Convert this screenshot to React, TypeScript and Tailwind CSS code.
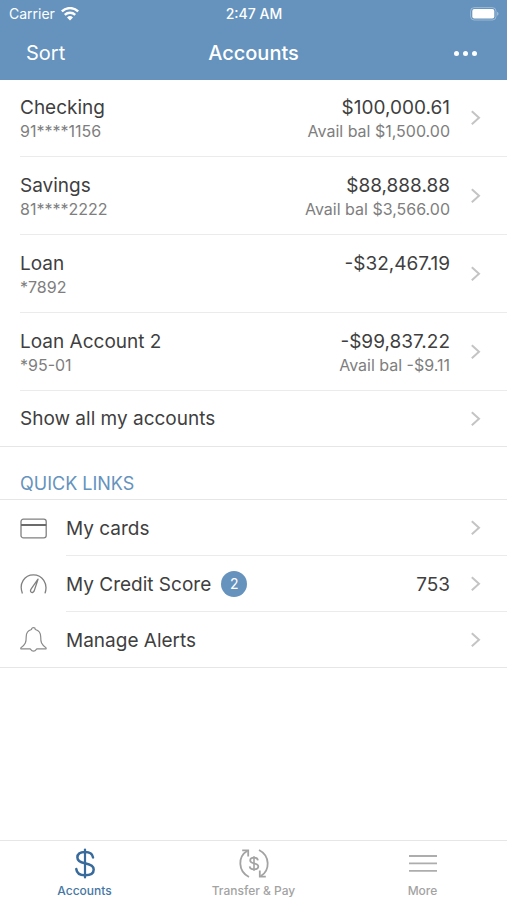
import type { ReactNode } from 'react';

const accounts = [
  { name: 'Checking', number: '91****1156', balance: '$100,000.61', available: 'Avail bal $1,500.00' },
  { name: 'Savings', number: '81****2222', balance: '$88,888.88', available: 'Avail bal $3,566.00' },
  { name: 'Loan', number: '*7892', balance: '-$32,467.19' },
  { name: 'Loan Account 2', number: '*95-01', balance: '-$99,837.22', available: 'Avail bal -$9.11' },
];

function Chevron() {
  return (
    <svg className="h-4 w-3 shrink-0" viewBox="0 0 12 16" fill="none" stroke="#c4c4c4" strokeWidth="2" aria-hidden="true">
      <path d="M1.8 1.2 9 7.7l-7.2 6.5" />
    </svg>
  );
}

function WifiIcon() {
  return (
    <svg className="h-[14px] w-[18px]" viewBox="0 0 18 14" fill="none" stroke="#fff" strokeWidth="2.4" aria-hidden="true">
      <path d="M.8 4.4a11.8 11.8 0 0 1 16.4 0" />
      <path d="M3.8 7.8a7.5 7.5 0 0 1 10.4 0" />
      <path d="M9 13.4 6 10.4a4.3 4.3 0 0 1 6 0Z" fill="#fff" stroke="none" />
    </svg>
  );
}

function BatteryIcon() {
  return (
    <svg className="h-[14px] w-[30px]" viewBox="0 0 30 14" fill="none" aria-hidden="true">
      <rect x="1.6" y=".6" width="25.4" height="12.4" rx="3.6" stroke="#fff" strokeOpacity=".35" />
      <rect x="3.3" y="2.1" width="22" height="9.4" rx="2" fill="#fff" />
      <path d="M28.2 4.8c1.7.6 1.7 3.4 0 4Z" fill="#fff" fillOpacity=".45" />
    </svg>
  );
}

function CardIcon() {
  return (
    <svg className="h-7 w-7" viewBox="0 0 28 28" fill="none" stroke="#808080" aria-hidden="true">
      <rect x="1" y="5.2" width="25.2" height="18.6" rx="2.4" strokeWidth="1.3" />
      <path d="M1 11h25.2" stroke="#6b6b6b" strokeWidth="2" />
    </svg>
  );
}

function GaugeIcon() {
  return (
    <svg className="h-7 w-7" viewBox="0 0 28 28" fill="none" stroke="#808080" strokeWidth="1.3" strokeLinejoin="round" aria-hidden="true">
      <path d="M2.4 23.4C-1.4 13.6 4.6 4.8 13.4 4.8s15 8.8 11.6 18.6" />
      <path d="M18 9.2 11.2 18.8c-2.3 3.4 1.5 5.2 3 2.1Z" />
    </svg>
  );
}

function BellIcon() {
  return (
    <svg className="h-7 w-7" viewBox="0 0 28 28" fill="none" stroke="#8a8a8a" strokeWidth="1.2" strokeLinejoin="round" aria-hidden="true">
      <path d="M11.5 3.5c0-2.5 3.8-2.5 3.8 0 3.5 1 5.4 3.6 5.4 7.2 0 5.6.5 7.4 5.4 11.2v.9h-8.9c-.6 0-.9.3-1.2.9-.9 1.9-4.1 1.9-5 0-.3-.6-.6-.9-1.2-.9H.8v-.9c4.9-3.8 5.4-5.6 5.4-11.2 0-3.6 1.8-6.2 5.3-7.2Z" />
    </svg>
  );
}

function DollarIcon() {
  return (
    <svg className="h-8 w-8" viewBox="0 0 32 32" fill="none" stroke="#386a9b" strokeWidth="2.5" strokeLinecap="round" aria-hidden="true">
      <path d="M16 1.5v28" strokeWidth="2.2" />
      <path d="M24 9.4c-.4-3.4-3.4-5.4-8-5.4-4.5 0-7.6 2-7.6 5.5 0 3.3 2.5 4.8 7.6 5.8 5.8 1.2 8.7 2.6 8.7 6.1 0 3.7-3.4 5.8-8.7 5.8-5.2 0-8.3-2.3-8.7-6.1" />
    </svg>
  );
}

function TransferIcon() {
  return (
    <svg className="h-8 w-8" viewBox="0 0 32 32" fill="none" stroke="#a3a3a3" strokeWidth="1.8" aria-hidden="true">
      <path d="M11 29C-.2 23.2-.4 8.6 9.4 2.7" />
      <path d="M4.2 2.3h6v6.2" />
      <path d="M21 2c11.2 5.8 11.4 20.4 1.6 26.3" />
      <path d="M27.8 28.7h-6v-6.2" />
      <path d="M16 8.3v14.4" strokeWidth="1.6" />
      <path d="M19.9 12.4c-.2-1.7-1.7-2.7-3.9-2.7s-3.8 1.1-3.8 2.8c0 1.8 1.4 2.3 3.8 2.9 2.9.6 4.3 1.5 4.3 3.2 0 1.8-1.7 2.8-4.3 2.8s-4.1-1.1-4.3-3" />
    </svg>
  );
}

function MenuIcon() {
  return (
    <svg className="h-8 w-8" viewBox="0 0 32 32" stroke="#adadad" strokeWidth="1.8" aria-hidden="true">
      <path d="M2 8h28M2 15.4h28M2 22.8h28" />
    </svg>
  );
}

function QuickLink({ icon, label, badge, value, last }: {
  icon: ReactNode;
  label: string;
  badge?: string;
  value?: string;
  last?: boolean;
}) {
  return (
    <li className={last ? 'border-b border-[#e6e6e6]' : ''}>
      <a href="#" className="flex items-stretch pl-5">
        <span className="flex w-[46px] items-center">{icon}</span>
        <span className={`flex flex-1 items-center pr-[25px] ${last ? 'h-[55px]' : 'h-14 border-b border-[#ebebeb]'}`}>
          <span className="pt-0.5">{label}</span>
          {badge && (
            <span className="ml-2.5 flex size-[26px] items-center justify-center rounded-full bg-[#6593bd] text-sm text-white">{badge}</span>
          )}
          <span className="mr-5 ml-auto pt-0.5">{value}</span>
          <Chevron />
        </span>
      </a>
    </li>
  );
}

function Tab({ icon, label, active }: { icon: ReactNode; label: string; active?: boolean }) {
  return (
    <a
      href="#"
      aria-current={active ? 'page' : undefined}
      className={`flex flex-1 flex-col items-center text-xs leading-4 font-medium ${active ? 'text-[#4577a5]' : 'text-[#a3a3a3]'}`}
    >
      {icon}
      <span className="mt-[3px]">{label}</span>
    </a>
  );
}

export default function App() {
  return (
    <div className="flex min-h-screen flex-col bg-white font-['Inter',sans-serif] text-[19px] leading-6 text-[#3f3f3f]">
      <header className="bg-[#6593bd] text-white">
        {/* Status bar */}
        <div className="grid h-7 grid-cols-3 items-center pr-2 pl-[9px] text-sm">
          <div className="flex items-center gap-1.5">
            <span>Carrier</span>
            <WifiIcon />
          </div>
          <span className="text-center font-medium">2:47 AM</span>
          <span className="justify-self-end">
            <BatteryIcon />
          </span>
        </div>

        {/* Title bar */}
        <div className="grid h-[52px] grid-cols-3 items-start px-[26px] pt-[13px] text-xl leading-6">
          <button type="button" className="justify-self-start">Sort</button>
          <h1 className="text-center font-medium">Accounts</h1>
          <button type="button" aria-label="More options" className="flex h-6 items-center gap-1 justify-self-end pr-1">
            <span className="size-[5px] rounded-full bg-white" />
            <span className="size-[5px] rounded-full bg-white" />
            <span className="size-[5px] rounded-full bg-white" />
          </button>
        </div>
      </header>

      <main className="flex-1">
        <ul>
          {accounts.map((account) => (
            <li key={account.name} className="group pl-5">
              <a
                href="#"
                className="flex h-[78px] items-center border-b border-[#ebebeb] pr-[25px] group-first:h-[77px]"
              >
                <div className="flex-1 self-start pt-[17px] group-first:pt-4">
                  <p>{account.name}</p>
                  <p className="text-base leading-[22px] text-[#7e7e7e]">{account.number}</p>
                </div>
                <div className="mr-5 self-start pt-[17px] text-right group-first:pt-4">
                  <p>{account.balance}</p>
                  <p className="text-base leading-[22px] text-[#7e7e7e]">{account.available}</p>
                </div>
                <Chevron />
              </a>
            </li>
          ))}
          <li>
            <a href="#" className="flex h-14 items-center justify-between border-b border-[#e6e6e6] pr-[25px] pl-5">
              <span>Show all my accounts</span>
              <Chevron />
            </a>
          </li>
        </ul>

        <h2 className="border-b border-[#e6e6e6] px-5 pt-[25px] pb-[3px] text-lg leading-6 text-[#6593bd]">QUICK LINKS</h2>
        <ul>
          <QuickLink icon={<CardIcon />} label="My cards" />
          <QuickLink icon={<GaugeIcon />} label="My Credit Score" badge="2" value="753" />
          <QuickLink icon={<BellIcon />} label="Manage Alerts" last />
        </ul>
      </main>

      <nav className="flex h-[60px] border-t border-[#e6e6e6] pt-[7px]">
        <Tab icon={<DollarIcon />} label="Accounts" active />
        <Tab icon={<TransferIcon />} label="Transfer & Pay" />
        <Tab icon={<MenuIcon />} label="More" />
      </nav>
    </div>
  );
}
